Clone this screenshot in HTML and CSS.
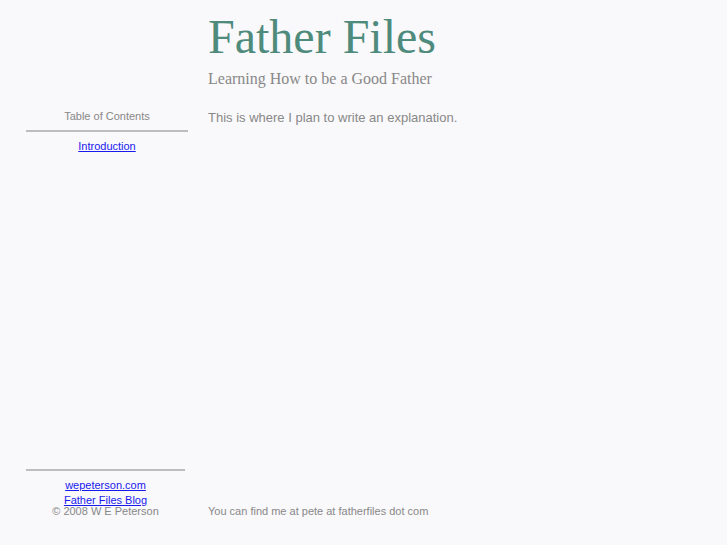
FILE: index.html
```html
<!DOCTYPE html>
<html lang="en">
<head>
    <meta charset="UTF-8">
    <title>Father Files</title>
    <link rel="stylesheet" href="styles.css">
</head>
<body>
    <div class="page">
        <div class="header">
            <h1 class="title">Father Files</h1>
            <div class="subtitle">Learning How to be a Good Father</div>
        </div>

        <div class="middle">
            <div class="sidebar">
                <div class="toc-title">Table of Contents</div>
                <hr class="rule">
                <a href="#">Introduction</a>
            </div>
            <div class="content">
                <p>This is where I plan to write an explanation.</p>
            </div>
        </div>

        <div class="footer">
            <div class="footer-side">
                <hr class="rule rule-bottom">
                <a href="#">wepeterson.com</a>
                <a href="#">Father Files Blog</a>
                <div class="copy">&copy; 2008 W E Peterson</div>
            </div>
            <div class="footer-main">You can find me at pete at fatherfiles dot com</div>
        </div>
    </div>
</body>
</html>
```

FILE: styles.css
```css
body {
    margin: 0;
    background-color: #f9f8fb;
    font-family: "Liberation Sans", Arial, sans-serif;
    color: #888;
}

.page {
    display: flex;
    flex-direction: column;
    height: 545px;
}

.header {
    padding-left: 208px;
    padding-top: 9px;
}

.title {
    margin: 0;
    font-family: "Liberation Serif", "Times New Roman", serif;
    font-weight: normal;
    font-size: 48px;
    line-height: 56px;
    color: #4f8b7c;
}

.subtitle {
    font-family: "Liberation Serif", "Times New Roman", serif;
    font-size: 16px;
    line-height: 20px;
    margin-top: 4px;
    color: #888;
}

.middle {
    display: flex;
    flex: 1;
    margin-top: 20px;
}

.sidebar {
    width: 162px;
    margin-left: 26px;
    display: flex;
    flex-direction: column;
    align-items: center;
    font-size: 11px;
}

.toc-title {
    line-height: 14px;
}

.rule {
    align-self: stretch;
    border: none;
    border-top: 2px solid #bdbcbf;
    margin: 7px 0 7px;
}

.sidebar a,
.footer-side a {
    color: #1a1aee;
    font-size: 11px;
    line-height: 15px;
}

.content {
    margin-left: 20px;
    font-size: 13px;
}

.content p {
    margin: 1px 0 0;
    line-height: 16px;
}

.footer {
    display: flex;
    align-items: flex-end;
    padding-bottom: 27px;
}

.footer-side {
    width: 159px;
    margin-left: 26px;
    display: flex;
    flex-direction: column;
    align-items: center;
    font-size: 11px;
}

.rule-bottom {
    margin: 0 0 7px;
}

.copy {
    margin-top: -3px;
    line-height: 13px;
}

.footer-main {
    margin-left: 23px;
    font-size: 11px;
    line-height: 13px;
}
```
